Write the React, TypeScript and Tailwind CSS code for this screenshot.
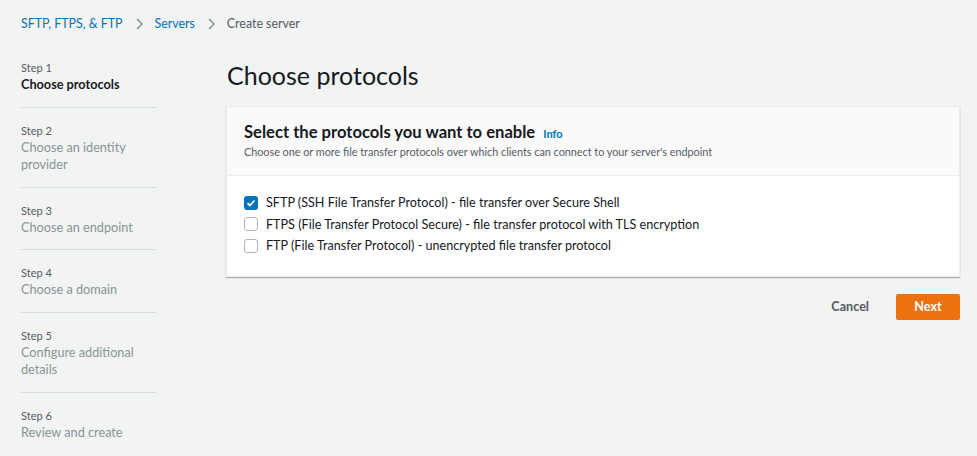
import React from "react";

const steps = [
  { label: "Step 1", title: "Choose protocols", active: true },
  { label: "Step 2", title: "Choose an identity provider" },
  { label: "Step 3", title: "Choose an endpoint" },
  { label: "Step 4", title: "Choose a domain" },
  { label: "Step 5", title: "Configure additional details" },
  { label: "Step 6", title: "Review and create" },
];

const protocols = [
  { text: "SFTP (SSH File Transfer Protocol) - file transfer over Secure Shell", checked: true },
  { text: "FTPS (File Transfer Protocol Secure) - file transfer protocol with TLS encryption", checked: false },
  { text: "FTP (File Transfer Protocol) - unencrypted file transfer protocol", checked: false },
];

function Chevron() {
  return (
    <svg width="16" height="16" viewBox="0 0 16 16" className="mx-[8px]">
      <path d="M6 3l5 5-5 5" fill="none" stroke="#879596" strokeWidth="1.5" />
    </svg>
  );
}

function Checkbox({ checked }: { checked: boolean }) {
  if (checked) {
    return (
      <span className="w-[14px] h-[14px] rounded-[3px] bg-[#0073bb] flex items-center justify-center shrink-0">
        <svg width="10" height="10" viewBox="0 0 10 10">
          <path d="M1.5 5.2l2.3 2.3L8.5 2.5" fill="none" stroke="#fff" strokeWidth="1.8" />
        </svg>
      </span>
    );
  }
  return <span className="w-[14px] h-[14px] rounded-[3px] border border-[#aab7b8] bg-white shrink-0" />;
}

export default function App() {
  return (
    <div
      className="w-[977px] h-[456px] bg-[#f2f3f3] text-[#16191f] overflow-hidden"
      style={{ fontFamily: "Lato, Arial, sans-serif" }}
    >
      <nav className="flex items-center pl-[21px] pt-[15px] h-[32px] text-[12.4px] leading-[18px]">
        <span className="text-[#0073bb]">SFTP, FTPS, &amp; FTP</span>
        <Chevron />
        <span className="text-[#0073bb]">Servers</span>
        <Chevron />
        <span className="text-[#545b64]">Create server</span>
      </nav>

      <div className="flex pl-[21px] pt-[28px]">
        <aside className="w-[135px] shrink-0 -mt-[15px]">
          {steps.map((s, i) => (
            <div
              key={s.label}
              className={`pt-[15px] pb-[13px] ${i === 0 ? "pt-0" : ""} ${
                i < steps.length - 1 ? "border-b border-[#d5dbdb]" : ""
              }`}
            >
              <div className="text-[11px] leading-[16px] text-[#545b64]">{s.label}</div>
              <div
                className={`text-[12.7px] leading-[17.5px] ${
                  s.active ? "font-bold text-[#16191f]" : "text-[#879596]"
                }`}
              >
                {s.title}
              </div>
            </div>
          ))}
        </aside>

        <main className="flex-1 pl-[70px] pr-[17px]">
          <h1 className="text-[25px] leading-[32px] font-normal -mt-[1px] pl-[1px]">Choose protocols</h1>
          <section className="mt-[15px] bg-white border border-[#eaeded] shadow-[0_1px_1px_0_rgba(0,28,36,0.3)]">
            <div className="bg-[#fafafa] border-b border-[#eaeded] px-[17px] pt-[14px] pb-[15px]">
              <div className="flex items-baseline gap-[8px]">
                <h2 className="text-[16.6px] leading-[22px] font-bold">Select the protocols you want to enable</h2>
                <span className="text-[11px] font-bold text-[#0073bb]">Info</span>
              </div>
              <p className="text-[10.8px] leading-[16px] text-[#545b64] mt-[1px]">
                Choose one or more file transfer protocols over which clients can connect to your server's endpoint
              </p>
            </div>
            <div className="px-[17px] pt-[18px] pb-[22px] flex flex-col gap-[4.5px]">
              {protocols.map((p) => (
                <label key={p.text} className="flex items-center gap-[8px] text-[12.6px] leading-[17px]">
                  <Checkbox checked={p.checked} />
                  <span>{p.text}</span>
                </label>
              ))}
            </div>
          </section>

          <div className="flex justify-end items-center mt-[17px] gap-[27px]">
            <button className="text-[12.6px] font-bold text-[#545b64]">Cancel</button>
            <button className="h-[26px] w-[64px] bg-[#ec7211] text-white text-[12.6px] font-bold rounded-[2px]">
              Next
            </button>
          </div>
        </main>
      </div>
    </div>
  );
}
